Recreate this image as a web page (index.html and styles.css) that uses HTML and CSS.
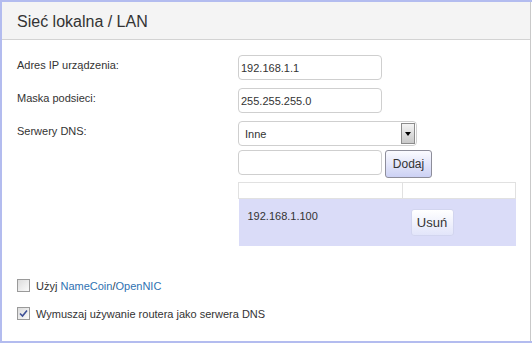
FILE: index.html
```html
<!DOCTYPE HTML>
<html>

<head>
  <meta charset="utf-8">
  <link rel="stylesheet" href="styles.css">
</head>

<body>
<div class="frame">
  <div class="panel">
    <div class="panel-head">
      <h1>Sieć lokalna / LAN</h1>
    </div>

    <div class="panel-body">
      <div class="row">
        <label class="row-label">Adres IP urządzenia:</label>
        <div class="row-field">
          <input class="text-input" type="text" value="192.168.1.1">
        </div>
      </div>

      <div class="row">
        <label class="row-label">Maska podsieci:</label>
        <div class="row-field">
          <input class="text-input" type="text" value="255.255.255.0">
        </div>
      </div>

      <div class="row">
        <label class="row-label">Serwery DNS:</label>
        <div class="row-field">
          <div class="fake-select">
            <span class="fake-select-text">Inne</span>
            <span class="fake-select-arrow"></span>
          </div>

          <div class="add-line">
            <input class="text-input" type="text" value="">
            <button class="btn btn-add">Dodaj</button>
          </div>

          <table class="dns-table">
            <tr class="dns-head">
              <th class="col-ip"></th>
              <th class="col-act"></th>
            </tr>
            <tr class="dns-row">
              <td class="col-ip">192.168.1.100</td>
              <td class="col-act"><button class="btn btn-del">Usuń</button></td>
            </tr>
          </table>
        </div>
      </div>

      <div class="checks">
        <div class="check-line">
          <span class="check"></span>
          <span>Użyj <a href="#">NameCoin</a>/<a href="#">OpenNIC</a></span>
        </div>
        <div class="check-line">
          <span class="check checked">
            <svg width="9" height="9" viewBox="0 0 9 9"><path d="M1 4.5 L3.5 7 L8 1.5" fill="none" stroke="#3d4f96" stroke-width="1.6"/></svg>
          </span>
          <span>Wymuszaj używanie routera jako serwera DNS</span>
        </div>
      </div>
    </div>
  </div>
</div>
</body>

</html>
```

FILE: styles.css
```css
body {
  margin: 0;
  font-family: "Liberation Sans", Arial, sans-serif;
  color: #333;
  background: #fff;
}

.frame {
  width: 532px;
  height: 343px;
  box-sizing: border-box;
  border: 2px solid #b3bcef;
  border-right: none;
}

.panel {
  height: 100%;
  box-sizing: border-box;
  border-right: 1px solid #c9c9c9;
  margin-right: 1px;
  background: #fff;
}

.panel-head {
  height: 37px;
  background: #f4f4f4;
  border-bottom: 1px solid #d3d3d3;
  padding-left: 15px;
}

.panel-head h1 {
  margin: 0;
  font-size: 16px;
  font-weight: normal;
  line-height: 39px;
  color: #333;
}

.panel-body {
  padding: 15px 0 0 15px;
  font-size: 11px;
}

.row {
  display: flex;
  align-items: flex-start;
  margin-bottom: 8px;
}

.row-label {
  width: 221px;
  padding-top: 4px;
}

.row-field {
  display: flex;
  flex-direction: column;
  align-items: flex-start;
}

.text-input {
  width: 144px;
  height: 25px;
  box-sizing: border-box;
  margin: 0;
  padding: 0 2px;
  border: 1px solid #cfcfcf;
  border-radius: 4px;
  font-family: inherit;
  font-size: 11px;
  color: #333;
  outline: none;
}

.fake-select {
  width: 179px;
  height: 25px;
  box-sizing: border-box;
  border: 1px solid #cfcfcf;
  border-radius: 4px;
  display: flex;
  align-items: center;
  justify-content: space-between;
  padding: 0 1px 0 6px;
}

.fake-select-arrow {
  width: 14px;
  height: 21px;
  box-sizing: border-box;
  border: 1px solid #8c8c8c;
  background: linear-gradient(#f4f4f4, #c9c9c9);
  display: flex;
  align-items: center;
  justify-content: center;
}

.fake-select-arrow::after {
  content: "";
  border-left: 3px solid transparent;
  border-right: 3px solid transparent;
  border-top: 4px solid #000;
}

.add-line {
  display: flex;
  gap: 3px;
  margin-top: 4px;
}

.btn {
  font-family: inherit;
  font-size: 12px;
  color: #333;
  border-radius: 3px;
  cursor: pointer;
}

.btn-add {
  width: 47px;
  height: 28px;
  border: 1px solid #8d8d9a;
  background: linear-gradient(#fbfbff, #ccd1f4);
  padding: 0;
}

.dns-table {
  margin-top: 4px;
  width: 278px;
  border-collapse: collapse;
}

.dns-table th,
.dns-table td {
  padding: 0;
}

.dns-head th {
  height: 15px;
  border: 1px solid #e1e1e1;
  background: #fff;
}

.dns-row {
  background: #dadcf8;
}

.dns-row td {
  height: 47px;
}

.col-ip {
  width: 163px;
}

.dns-row .col-ip {
  vertical-align: top;
  padding: 11px 0 0 9px;
  box-sizing: border-box;
}

.dns-row .col-act {
  vertical-align: middle;
  padding-left: 8px;
}

.btn-del {
  width: 43px;
  height: 27px;
  padding: 0;
  font-size: 13px;
  border: 1px solid #d2d5ef;
  background: linear-gradient(#ffffff, #e2e5fa);
}

.checks {
  margin-top: 33px;
}

.check-line {
  display: flex;
  align-items: center;
  gap: 6px;
  height: 13px;
  margin-bottom: 15px;
}

.check {
  width: 13px;
  height: 13px;
  box-sizing: border-box;
  border: 1px solid #9a9a9a;
  background: linear-gradient(135deg, #dcdcdc, #fafafa);
  display: flex;
  align-items: center;
  justify-content: center;
}

.check-line a {
  color: #2f72b2;
  text-decoration: none;
}
```
